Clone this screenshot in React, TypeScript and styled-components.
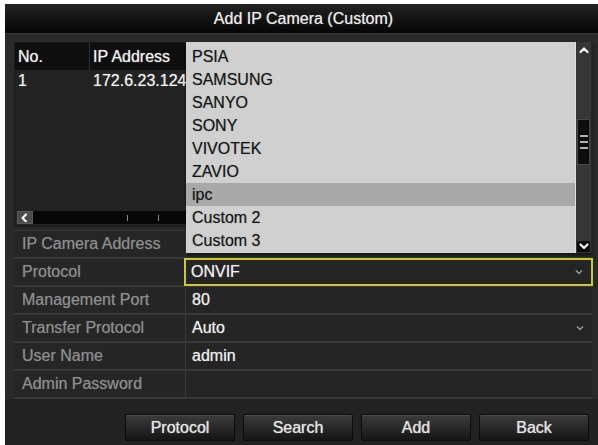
import { Fragment } from 'react';
import styled, { createGlobalStyle } from 'styled-components';

const GlobalStyle = createGlobalStyle`
  html, body {
    margin: 0;
    padding: 0;
    background: #ffffff;
  }
  body {
    font-family: 'Liberation Sans', Arial, sans-serif;
    font-size: 16px;
  }
`;

const Window = styled.div`
  margin: 4px 0 0 5px;
  width: 593px;
  height: 441px;
  background: #2a2a2a;
  display: flex;
  flex-direction: column;
  overflow: hidden;
`;

const TitleBar = styled.div`
  height: 29px;
  flex-shrink: 0;
  display: flex;
  align-items: center;
  justify-content: center;
  padding-left: 4px;
  background: linear-gradient(#222222, #050505);
  border-bottom: 1px solid #3a3a3a;
  color: #ececec;
  font-size: 16px;
  text-shadow: 0 0 1px rgba(255, 255, 255, 0.6);
`;

const Body = styled.div`
  position: relative;
  flex: 1;
  display: flex;
  flex-direction: column;
  padding: 8px 6px 0 9px;
`;

// camera list table
const Table = styled.div`
  height: 183px;
  display: flex;
  flex-direction: column;
  background: #232323;
  border: 1px solid #1a1a1a;
`;

const HeaderRow = styled.div`
  height: 27px;
  display: grid;
  grid-template-columns: 74px 1fr;
  gap: 1px;
  background: #2e2e2e;
`;

const HeaderCell = styled.div`
  display: flex;
  align-items: center;
  padding-left: 3px;
  background: #0f0f0f;
  color: #f0f0f0;
  font-size: 16px;
  text-shadow: 0 0 1px rgba(255, 255, 255, 0.7);
`;

const DataRow = styled.div`
  height: 22px;
  display: grid;
  grid-template-columns: 74px 1fr;
  gap: 1px;
`;

const DataCell = styled.div`
  display: flex;
  align-items: center;
  padding-left: 3px;
  color: #f0f0f0;
  white-space: nowrap;
  text-shadow: 0 0 1px rgba(255, 255, 255, 0.6);
`;

const TableFill = styled.div`
  flex: 1;
`;

const HScroll = styled.div`
  height: 13px;
  margin: 0 0 2px 2px;
  display: flex;
`;

const HScrollButton = styled.div`
  width: 16px;
  display: flex;
  align-items: center;
  justify-content: center;
  background: #4a4a4a;
  border: 1px solid #5a5a5a;
  box-sizing: border-box;
`;

const HScrollTrack = styled.div`
  flex: 1;
  display: flex;
  align-items: center;
  gap: 30px;
  padding-left: 94px;
  background: #070707;
`;

const Tick = styled.span`
  width: 1px;
  height: 6px;
  background: #8a8a8a;
`;

// settings form
const Form = styled.div`
  margin-top: 3px;
  display: grid;
  grid-template-columns: 171px 1fr;
  grid-auto-rows: 26px;
  gap: 2px 1px;
  padding: 1px 0 2px;
  background: #383838;
`;

const Label = styled.div`
  display: flex;
  align-items: center;
  padding-left: 8px;
  background: #262626;
  color: #8e8e8e;
  text-shadow: 0 0 1px rgba(160, 160, 160, 0.5);
`;

const Value = styled.div<{ $focused?: boolean }>`
  display: flex;
  align-items: center;
  justify-content: space-between;
  padding: 0 8px 0 6px;
  background: #252525;
  color: #f0f0f0;
  box-sizing: border-box;
  text-shadow: 0 0 1px rgba(255, 255, 255, 0.6);
  ${(p) => p.$focused && `border: 2px solid #c9c93a; padding-left: 5px; margin: -1px -1px -1px -2px;`}
`;

const Caret = styled.svg`
  width: 8px;
  height: 6px;
`;

const ButtonBar = styled.div`
  flex: 1;
  display: flex;
  justify-content: flex-end;
  align-items: flex-start;
  gap: 8px;
  margin: 0 -6px 0 -9px;
  padding: 15px 9px 0 0;
  background: #222222;
`;

const Button = styled.button`
  width: 110px;
  height: 27px;
  border: 1px solid #0c0c0c;
  border-radius: 2px;
  background: linear-gradient(#3c3c3c, #151515);
  box-shadow: inset 0 1px 0 #4c4c4c;
  color: #e2e2e2;
  font-family: 'Liberation Sans', Arial, sans-serif;
  font-size: 16px;
  text-shadow: 0 0 1px rgba(255, 255, 255, 0.8);
`;

// open protocol drop-down
const DropList = styled.div`
  position: absolute;
  left: 181px;
  top: 8px;
  width: 406px;
  height: 211px;
  display: flex;
  box-shadow: 0 2px 3px rgba(0, 0, 0, 0.5);
`;

const Options = styled.div`
  flex: 1;
  padding-top: 3px;
  background: #d0d0d0;
  border-right: 1px solid #e0e0e0;
`;

const Option = styled.div<{ $active?: boolean }>`
  height: 23px;
  line-height: 23px;
  padding-left: 6px;
  color: #161616;
  text-shadow: 0 0 1px rgba(0, 0, 0, 0.4);
  background: ${(p) => (p.$active ? '#a9a9a9' : 'transparent')};
`;

const ScrollCol = styled.div`
  width: 15px;
  display: flex;
  flex-direction: column;
  align-items: center;
  padding: 4px 0 1px;
  background: #363636;
  border-right: 1px solid #262626;
`;

const ArrowBox = styled.div<{ $dark?: boolean }>`
  width: 13px;
  height: ${(p) => (p.$dark ? '11px' : '9px')};
  display: flex;
  align-items: center;
  justify-content: center;
  background: ${(p) => (p.$dark ? '#0a0a0a' : 'transparent')};
`;

const Track = styled.div`
  flex: 1;
  width: 100%;
  display: flex;
  flex-direction: column;
  align-items: center;
`;

const Thumb = styled.div`
  margin-top: 64px;
  width: 13px;
  height: 46px;
  display: flex;
  flex-direction: column;
  align-items: center;
  justify-content: center;
  gap: 4px;
  background: #0d0d0d;
  border: 1px solid #484848;
  box-sizing: border-box;
`;

const Grip = styled.span`
  width: 8px;
  height: 2px;
  background: #b0b0b0;
`;

const Chevron = ({ dir, color = '#f2f2f2' }: { dir: 'up' | 'down' | 'left'; color?: string }) => {
  const d =
    dir === 'up' ? 'M1.5 6 L5 2.5 L8.5 6' : dir === 'down' ? 'M1.5 2.5 L5 6 L8.5 2.5' : 'M6 1.5 L2.5 5 L6 8.5';
  return (
    <svg width="10" height="9" viewBox="0 0 10 9">
      <path d={d} fill="none" stroke={color} strokeWidth="2.2" strokeLinecap="round" strokeLinejoin="round" />
    </svg>
  );
};

const DownCaret = () => (
  <Caret viewBox="0 0 8 6">
    <path d="M1 1.5 L4 4.5 L7 1.5" fill="none" stroke="#9a9a9a" strokeWidth="1.5" />
  </Caret>
);

const protocols = ['PSIA', 'SAMSUNG', 'SANYO', 'SONY', 'VIVOTEK', 'ZAVIO', 'ipc', 'Custom 2', 'Custom 3'];

const fields: { label: string; value: string; select?: boolean; focused?: boolean }[] = [
  { label: 'IP Camera Address', value: '' },
  { label: 'Protocol', value: 'ONVIF', select: true, focused: true },
  { label: 'Management Port', value: '80' },
  { label: 'Transfer Protocol', value: 'Auto', select: true },
  { label: 'User Name', value: 'admin' },
  { label: 'Admin Password', value: '' },
];

export default function App() {
  return (
    <>
      <GlobalStyle />
      <Window>
        <TitleBar>Add IP Camera (Custom)</TitleBar>
        <Body>
          <Table>
            <HeaderRow>
              <HeaderCell>No.</HeaderCell>
              <HeaderCell>IP Address</HeaderCell>
            </HeaderRow>
            <DataRow>
              <DataCell>1</DataCell>
              <DataCell>172.6.23.124</DataCell>
            </DataRow>
            <TableFill />
            <HScroll>
              <HScrollButton>
                <Chevron dir="left" />
              </HScrollButton>
              <HScrollTrack>
                <Tick />
                <Tick />
              </HScrollTrack>
            </HScroll>
          </Table>

          <Form>
            {fields.map((f) => (
              <Fragment key={f.label}>
                <Label>{f.label}</Label>
                <Value $focused={f.focused}>
                  <span>{f.value}</span>
                  {f.select && <DownCaret />}
                </Value>
              </Fragment>
            ))}
          </Form>

          <ButtonBar>
            <Button>Protocol</Button>
            <Button>Search</Button>
            <Button>Add</Button>
            <Button>Back</Button>
          </ButtonBar>

          <DropList>
            <Options>
              {protocols.map((p) => (
                <Option key={p} $active={p === 'ipc'}>
                  {p}
                </Option>
              ))}
            </Options>
            <ScrollCol>
              <ArrowBox>
                <Chevron dir="up" />
              </ArrowBox>
              <Track>
                <Thumb>
                  <Grip />
                  <Grip />
                  <Grip />
                </Thumb>
              </Track>
              <ArrowBox $dark>
                <Chevron dir="down" />
              </ArrowBox>
            </ScrollCol>
          </DropList>
        </Body>
      </Window>
    </>
  );
}
